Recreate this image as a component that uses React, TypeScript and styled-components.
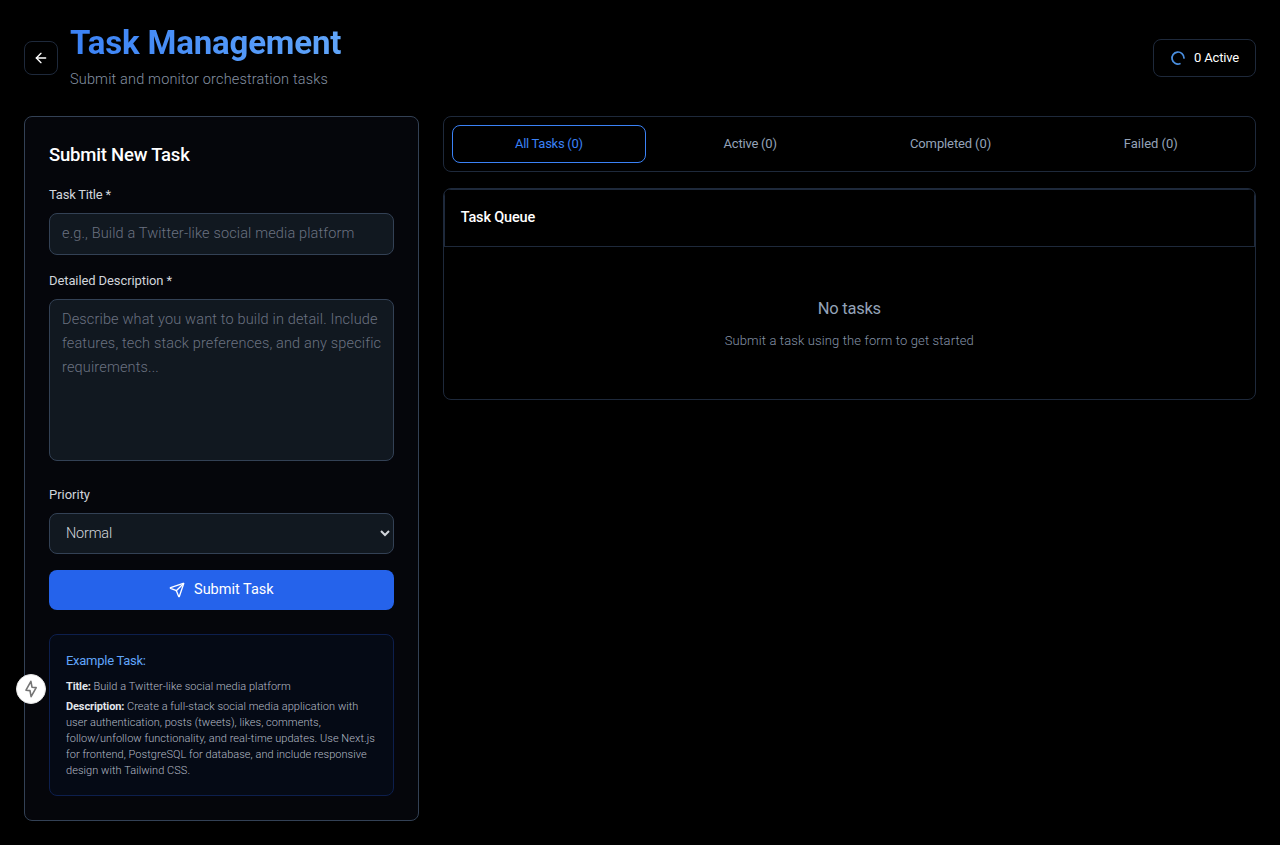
import React from 'react';
import styled, { createGlobalStyle } from 'styled-components';
import { ArrowLeft, Send } from 'lucide-react';

const GlobalStyle = createGlobalStyle`
  *, *::before, *::after { box-sizing: border-box; }
  body {
    margin: 0;
    background: #000;
    color: #fff;
    font-family: Roboto, "Liberation Sans", sans-serif;
  }
  h1, h2, h3, p { margin: 0; font-weight: inherit; }
  input, textarea, select, button { font-family: inherit; margin: 0; }
`;

const Page = styled.div`
  position: relative;
  min-height: 845px;
  padding: 24px;
  background: #000;
`;

const Header = styled.header`
  display: flex;
  align-items: center;
  justify-content: space-between;
  height: 68px;
  margin-bottom: 24px;
`;

const HeaderLeft = styled.div`
  display: flex;
  align-items: center;
  gap: 12px;
`;

const BackButton = styled.button`
  display: flex;
  align-items: center;
  justify-content: center;
  width: 34px;
  height: 34px;
  padding: 0;
  color: #fff;
  background: #000;
  border: 1px solid #1e293b;
  border-radius: 8px;
`;

const Title = styled.h1`
  width: max-content;
  margin-bottom: 6px;
  font-size: 33px;
  font-weight: 700;
  line-height: 38px;
  letter-spacing: -0.18px;
  color: transparent;
  background: linear-gradient(90deg, #3b82f6, #60a5fa);
  background-clip: text;
  -webkit-background-clip: text;
`;

const Subtitle = styled.p`
  font-size: 14.5px;
  font-weight: 300;
  line-height: 24px;
  letter-spacing: 0.17px;
  color: #8490a2;
`;

const ActiveBadge = styled.div`
  display: flex;
  align-items: center;
  gap: 8px;
  height: 38px;
  padding: 0 16px;
  border: 1px solid #1e293b;
  border-radius: 8px;
  font-size: 13px;
  line-height: 20px;
  letter-spacing: -0.17px;
`;

const Columns = styled.div`
  display: grid;
  grid-template-columns: repeat(3, minmax(0, 1fr));
  gap: 24px;
  align-items: start;
`;

const FormCard = styled.section`
  padding: 24px;
  background: #05060b;
  border: 1px solid #334155;
  border-radius: 8px;
`;

const FormTitle = styled.h2`
  margin-bottom: 16px;
  font-size: 18.5px;
  font-weight: 500;
  line-height: 28px;
  letter-spacing: -0.2px;
`;

const Form = styled.div`
  display: flex;
  flex-direction: column;
  gap: 16px;
`;

const Field = styled.div<{ $extra?: number }>`
  display: flex;
  flex-direction: column;
  padding-bottom: ${(p) => p.$extra ?? 0}px;
`;

const Label = styled.label<{ $spacing: number }>`
  margin-bottom: 8px;
  font-size: 13px;
  line-height: 20px;
  letter-spacing: ${(p) => p.$spacing}px;
  color: #d1d5db;
`;

const TextInput = styled.input`
  width: 100%;
  height: 42px;
  padding: 0 12px 1px;
  font-size: 14.5px;
  font-weight: 300;
  letter-spacing: 0.14px;
  color: #fff;
  background: #111820;
  border: 1px solid #334155;
  border-radius: 8px;
  &::placeholder { color: #6b7280; }
`;

const TextArea = styled.textarea`
  display: block;
  width: 100%;
  height: 162px;
  padding: 8px 10px 8px 12px;
  font-size: 14.5px;
  font-weight: 300;
  line-height: 24px;
  letter-spacing: 0.155px;
  color: #fff;
  background: #111820;
  border: 1px solid #334155;
  border-radius: 8px;
  resize: none;
  overflow: hidden;
  &::placeholder { color: #6b7280; }
`;

const Select = styled.select`
  width: 100%;
  height: 41px;
  padding: 0 0 0 12px;
  font-size: 14.5px;
  font-weight: 300;
  letter-spacing: -0.2px;
  color: #d1d5db;
  background: #111820;
  border: 1px solid #334155;
  border-radius: 8px;
  color-scheme: dark;
`;

const SubmitButton = styled.button`
  display: flex;
  align-items: center;
  justify-content: center;
  gap: 9px;
  width: 100%;
  height: 40px;
  padding: 0;
  font-size: 14.5px;
  line-height: 24px;
  color: #fff;
  background: #2563eb;
  border: 0;
  border-radius: 8px;
`;

const Example = styled.div`
  margin-top: 24px;
  padding: 16px 12px 16px 16px;
  background: #050a15;
  border: 1px solid #0d1f4d;
  border-radius: 8px;
`;

const ExampleTitle = styled.h3`
  margin-bottom: 8px;
  font-size: 13px;
  line-height: 20px;
  letter-spacing: -0.27px;
  color: #60a5fa;
`;

const ExampleText = styled.p`
  font-size: 11px;
  font-weight: 300;
  line-height: 16px;
  letter-spacing: 0.055px;
  color: #b4bac5;
  & + & { margin-top: 4px; }
  strong {
    font-weight: 700;
    letter-spacing: -0.12px;
    color: #e2e5ea;
  }
`;

const Queue = styled.main`
  grid-column: span 2;
  display: flex;
  flex-direction: column;
  gap: 16px;
`;

const Tabs = styled.nav`
  display: flex;
  gap: 8px;
  padding: 8px;
  border: 1px solid #1e293b;
  border-radius: 8px;
`;

const Tab = styled.button<{ $active?: boolean; $spacing: number }>`
  flex: 1 1 0;
  height: 38px;
  padding: 0 16px 1px;
  font-size: 13px;
  line-height: 20px;
  letter-spacing: ${(p) => p.$spacing}px;
  color: ${(p) => (p.$active ? '#3b82f6' : '#94a3b8')};
  background: #000;
  border: ${(p) => (p.$active ? '1px solid #3b82f6' : '0')};
  border-radius: 8px;
`;

const QueueCard = styled.section`
  overflow: hidden;
  border: 1px solid #1e293b;
  border-radius: 8px;
`;

const QueueHeader = styled.div`
  padding: 16px;
  border: 1px solid #1e293b;
`;

const QueueTitle = styled.h3`
  font-size: 14.5px;
  font-weight: 500;
  line-height: 24px;
  letter-spacing: -0.15px;
`;

const Empty = styled.div`
  padding: 48px 16px;
  text-align: center;
`;

const EmptyTitle = styled.p`
  margin-bottom: 8px;
  font-size: 16.5px;
  line-height: 28px;
  letter-spacing: -0.25px;
  color: #94a3b8;
`;

const EmptyText = styled.p`
  font-size: 13px;
  font-weight: 300;
  line-height: 20px;
  letter-spacing: 0.13px;
  color: #8593a8;
`;

const FloatingButton = styled.button`
  position: absolute;
  left: 16px;
  top: 674px;
  display: flex;
  align-items: center;
  justify-content: center;
  width: 30px;
  height: 30px;
  padding: 0;
  color: #757575;
  background: #fff;
  border: 1px solid #e5e5e5;
  border-radius: 50%;
`;

const tabs = [
  { label: 'All Tasks (0)', active: true, spacing: -0.28 },
  { label: 'Active (0)', spacing: -0.22 },
  { label: 'Completed (0)', spacing: -0.12 },
  { label: 'Failed (0)', spacing: 0 },
];

export default function App() {
  return (
    <Page>
      <GlobalStyle />
      <Header>
        <HeaderLeft>
          <BackButton aria-label="Back"><ArrowLeft size={16} /></BackButton>
          <div>
            <Title>Task Management</Title>
            <Subtitle>Submit and monitor orchestration tasks</Subtitle>
          </div>
        </HeaderLeft>
        <ActiveBadge>
          <svg width="16" height="16" viewBox="0 0 24 24" fill="none" stroke="#4a8fe0" strokeWidth="2.6" strokeLinecap="round">
            <path d="M21 12a9 9 0 1 0-6.2 8.56" />
          </svg>
          0 Active
        </ActiveBadge>
      </Header>
      <Columns>
        <FormCard>
          <FormTitle>Submit New Task</FormTitle>
          <Form>
            <Field>
              <Label $spacing={-0.22}>Task Title *</Label>
              <TextInput placeholder="e.g., Build a Twitter-like social media platform" />
            </Field>
            <Field $extra={8}>
              <Label $spacing={-0.1}>Detailed Description *</Label>
              <TextArea placeholder="Describe what you want to build in detail. Include features, tech stack preferences, and any specific requirements..." />
            </Field>
            <Field>
              <Label $spacing={-0.02}>Priority</Label>
              <Select defaultValue="normal">
                <option value="normal">Normal</option>
              </Select>
            </Field>
            <SubmitButton><Send size={16} />Submit Task</SubmitButton>
          </Form>
          <Example>
            <ExampleTitle>Example Task:</ExampleTitle>
            <ExampleText><strong>Title:</strong> Build a Twitter-like social media platform</ExampleText>
            <ExampleText>
              <strong>Description:</strong> Create a full-stack social media application with<br />
              user authentication, posts (tweets), likes, comments,<br />
              follow/unfollow functionality, and real-time updates. Use Next.js<br />
              for frontend, PostgreSQL for database, and include responsive<br />
              design with Tailwind CSS.
            </ExampleText>
          </Example>
        </FormCard>
        <Queue>
          <Tabs>
            {tabs.map((t) => (
              <Tab key={t.label} $active={t.active} $spacing={t.spacing}>{t.label}</Tab>
            ))}
          </Tabs>
          <QueueCard>
            <QueueHeader><QueueTitle>Task Queue</QueueTitle></QueueHeader>
            <Empty>
              <EmptyTitle>No tasks</EmptyTitle>
              <EmptyText>Submit a task using the form to get started</EmptyText>
            </Empty>
          </QueueCard>
        </Queue>
      </Columns>
      <FloatingButton aria-label="Quick actions">
        <svg width="14" height="18" viewBox="0 0 14 18" fill="none" stroke="currentColor" strokeWidth="1.6" strokeLinejoin="round">
          <path d="M6.9 1.4 2 10.2 6 10.6 7.1 16.6 12.2 7.6 8 7.2Z" />
        </svg>
      </FloatingButton>
    </Page>
  );
}
